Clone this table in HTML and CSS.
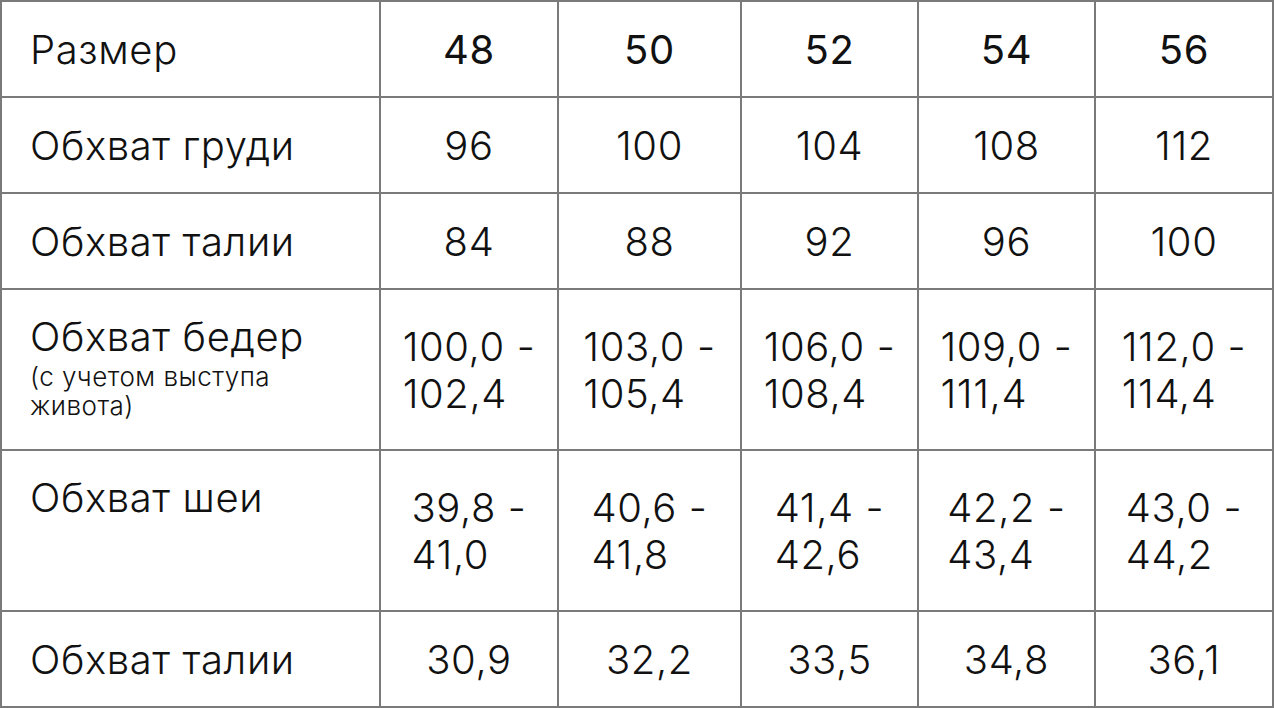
FILE: index.html
```html
<!DOCTYPE html>
<html lang="ru">
<head>
<meta charset="utf-8">
<title>Таблица размеров</title>
<link rel="stylesheet" href="styles.css">
</head>
<body>
<div class="chart">
  <div class="cell label">Размер</div>
  <div class="cell num head">48</div>
  <div class="cell num head">50</div>
  <div class="cell num head">52</div>
  <div class="cell num head">54</div>
  <div class="cell num head">56</div>

  <div class="cell label">Обхват груди</div>
  <div class="cell num">96</div>
  <div class="cell num">100</div>
  <div class="cell num">104</div>
  <div class="cell num">108</div>
  <div class="cell num">112</div>

  <div class="cell label">Обхват талии</div>
  <div class="cell num">84</div>
  <div class="cell num">88</div>
  <div class="cell num">92</div>
  <div class="cell num">96</div>
  <div class="cell num">100</div>

  <div class="cell label top">
    <div class="label-main">Обхват бедер</div>
    <div class="label-note">(с учетом выступа<br>живота)</div>
  </div>
  <div class="cell num"><span class="range">100,0 -<br>102,4</span></div>
  <div class="cell num"><span class="range">103,0 -<br>105,4</span></div>
  <div class="cell num"><span class="range">106,0 -<br>108,4</span></div>
  <div class="cell num"><span class="range">109,0 -<br>111,4</span></div>
  <div class="cell num"><span class="range">112,0 -<br>114,4</span></div>

  <div class="cell label top">
    <div class="label-main">Обхват шеи</div>
  </div>
  <div class="cell num"><span class="range">39,8 -<br>41,0</span></div>
  <div class="cell num"><span class="range">40,6 -<br>41,8</span></div>
  <div class="cell num"><span class="range">41,4 -<br>42,6</span></div>
  <div class="cell num"><span class="range">42,2 -<br>43,4</span></div>
  <div class="cell num"><span class="range">43,0 -<br>44,2</span></div>

  <div class="cell label">Обхват талии</div>
  <div class="cell num">30,9</div>
  <div class="cell num">32,2</div>
  <div class="cell num">33,5</div>
  <div class="cell num">34,8</div>
  <div class="cell num">36,1</div>
</div>
</body>
</html>
```

FILE: styles.css
```css
html, body {
  margin: 0;
  padding: 0;
  background: #ffffff;
}

.chart {
  display: grid;
  grid-template-columns: 377px 176px 181px 175px 175px 176px;
  grid-template-rows: 94px 94px 94px 159px 159px 94px;
  gap: 2px;
  padding: 2px;
  width: 1274px;
  height: 708px;
  box-sizing: border-box;
  background: #7a7a7a;
  font-family: "Inter", "Noto Sans", "Liberation Sans", sans-serif;
  font-weight: 300;
  font-size: 40px;
  letter-spacing: 0.6px;
  color: #111111;
}

.cell {
  background: #ffffff;
  display: flex;
  align-items: center;
  line-height: 47px;
}

.label {
  padding-left: 28px;
}

.label.top {
  flex-direction: column;
  align-items: flex-start;
  justify-content: flex-start;
  padding-top: 23px;
}

.label-main {
  line-height: 47px;
}

.label-note {
  font-size: 26px;
  line-height: 29px;
  letter-spacing: 0.5px;
  margin-top: 2px;
}

.num {
  justify-content: center;
}

.head {
  font-weight: 400;
}

.range {
  display: inline-block;
  text-align: left;
  line-height: 47px;
}
```
